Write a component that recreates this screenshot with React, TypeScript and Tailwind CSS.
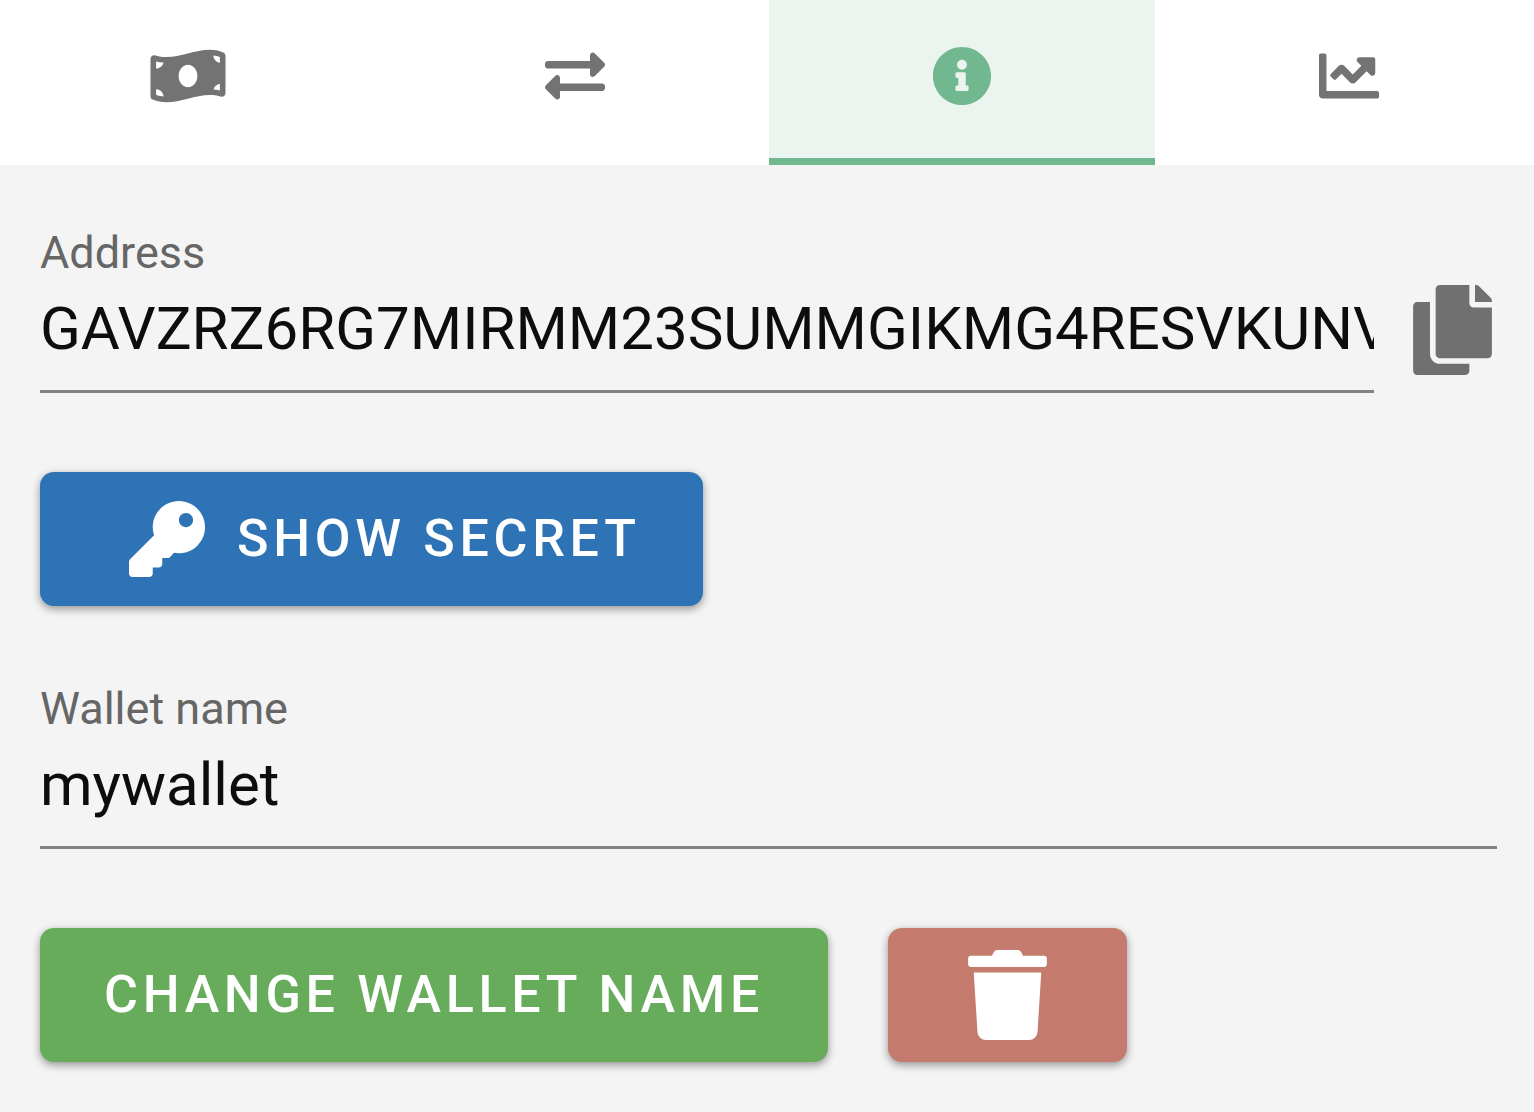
import { useState } from "react";
import {
  FaChartLine,
  FaCopy,
  FaExchangeAlt,
  FaInfoCircle,
  FaKey,
  FaMoneyBillWave,
  FaTrash,
} from "react-icons/fa";

const tabs = [
  { label: "Balance", icon: <FaMoneyBillWave className="h-[60px] w-[76px]" /> },
  { label: "Transfer", icon: <FaExchangeAlt className="size-[60px]" /> },
  { label: "Info", icon: <FaInfoCircle className="size-[60px]" /> },
  { label: "Chart", icon: <FaChartLine className="size-[60px]" /> },
];

const raised =
  "flex h-[134px] items-center justify-center rounded-[14px] text-[52px] leading-none font-medium tracking-[0.09em] text-white uppercase shadow-[0_3px_8px_rgba(0,0,0,0.4)]";

function Field({ id, label, value, onChange, readOnly }: {
  id: string;
  label: string;
  value: string;
  onChange?: (value: string) => void;
  readOnly?: boolean;
}) {
  return (
    <div className="min-w-0 flex-1 border-b-[3px] border-[#828282]">
      <label htmlFor={id} className="block text-[45px] leading-[58px] text-[#666666]">
        {label}
      </label>
      <input
        id={id}
        type="text"
        value={value}
        readOnly={readOnly}
        onChange={(e) => onChange?.(e.target.value)}
        className="block h-[108px] w-full bg-transparent pb-4 text-[60px] text-[#0d0d0d] outline-none"
      />
    </div>
  );
}

export default function App() {
  const [active, setActive] = useState(2);
  const [name, setName] = useState("mywallet");

  return (
    <div className="min-h-screen overflow-hidden bg-[#f4f4f4] font-[Roboto,sans-serif]">
      <nav className="-mr-2 -ml-[5px] grid h-[165px] grid-cols-4 bg-white" role="tablist">
        {tabs.map((tab, i) => (
          <button
            key={tab.label}
            type="button"
            role="tab"
            aria-label={tab.label}
            aria-selected={active === i}
            onClick={() => setActive(i)}
            className={
              active === i
                ? "flex items-center justify-center border-b-[7px] border-[#71b891] bg-[#ebf4ef] pb-1.5 text-[#71b891]"
                : "flex items-center justify-center border-b-[7px] border-transparent pb-1.5 text-[#737373]"
            }
          >
            {tab.icon}
          </button>
        ))}
      </nav>

      <main className="pt-[59px] pr-[37px] pb-12 pl-10">
        <div className="flex items-center gap-[39px]">
          <Field
            id="address"
            label="Address"
            value="GAVZRZ6RG7MIRMM23SUMMGIKMG4RESVKUNV"
            readOnly
          />
          <button type="button" aria-label="Copy address" className="mt-[42px] mr-[5px] text-[#707070]">
            <FaCopy className="h-[90px] w-[79px]" />
          </button>
        </div>

        <button type="button" className={`${raised} mt-[79px] gap-8 bg-[#2e73b6] pr-[62px] pl-[89px]`}>
          <FaKey className="size-[76px]" />
          Show secret
        </button>

        <div className="mt-[74px] flex">
          <Field id="wallet-name" label="Wallet name" value={name} onChange={setName} />
        </div>

        <div className="mt-[79px] flex gap-[60px]">
          <button type="button" className={`${raised} bg-[#67ac5b] px-16`}>
            Change wallet name
          </button>
          <button type="button" aria-label="Delete wallet" className={`${raised} bg-[#c47b6e] px-20`}>
            <FaTrash className="h-[90px] w-[79px]" />
          </button>
        </div>
      </main>
    </div>
  );
}
